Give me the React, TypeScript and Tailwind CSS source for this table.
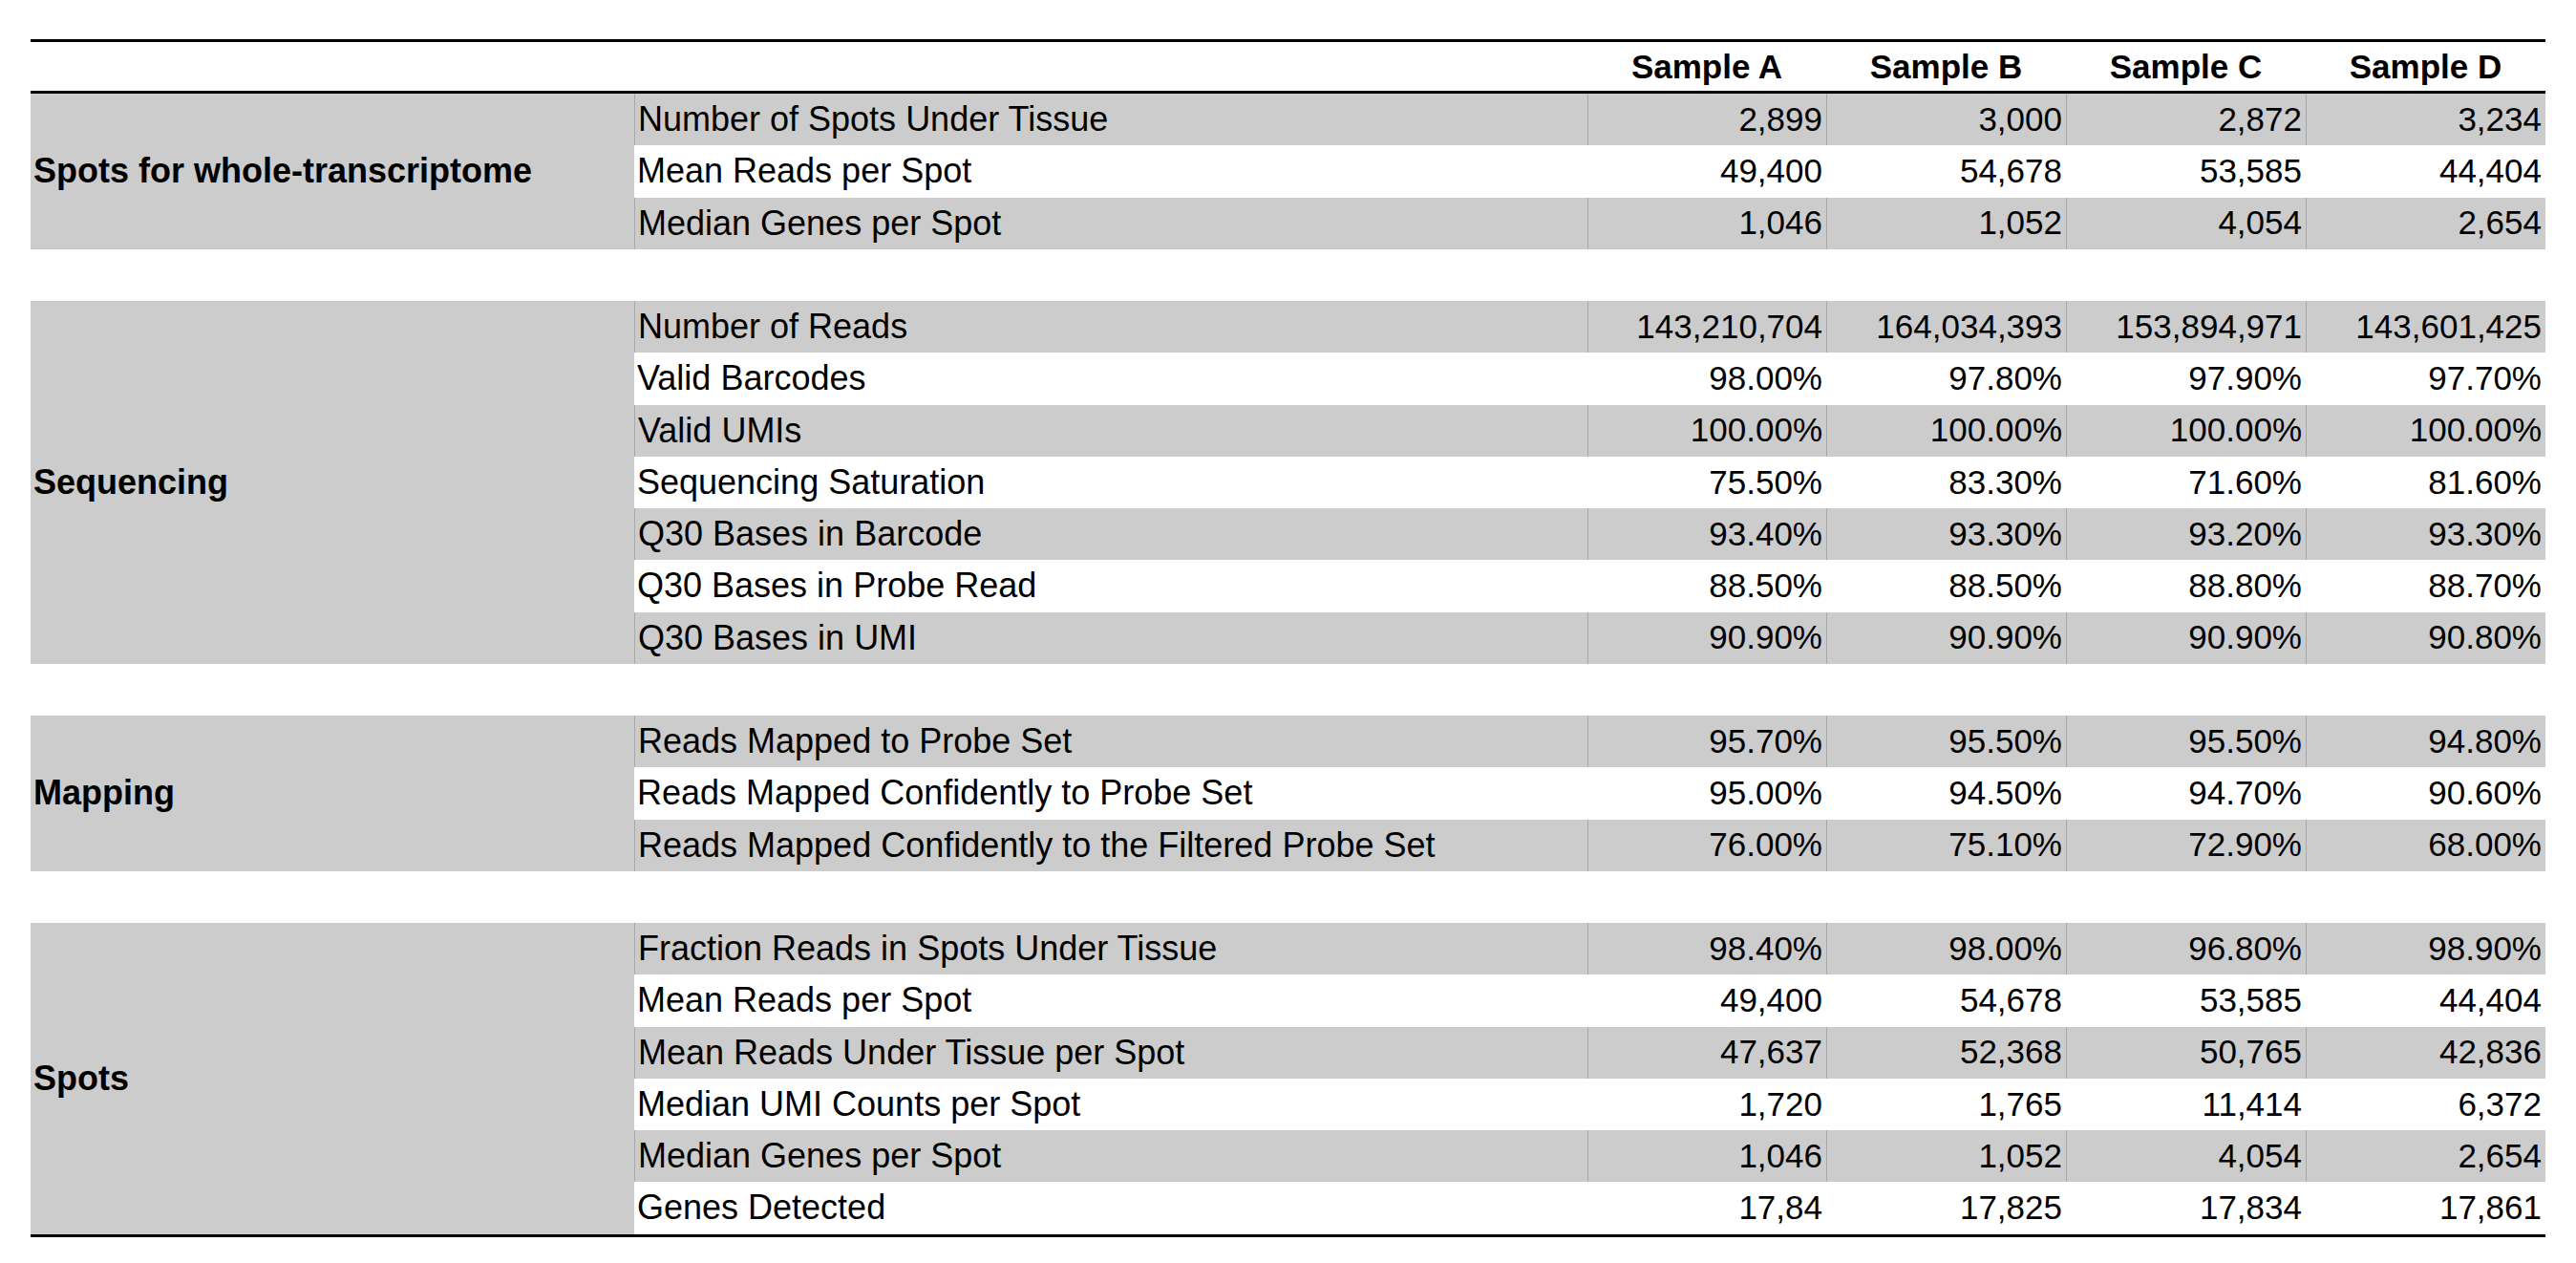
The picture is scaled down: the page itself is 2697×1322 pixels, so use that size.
type Section = {
  title: string;
  rows: [string, string, string, string, string][];
};

const sections: Section[] = [
  {
    title: "Spots for whole-transcriptome",
    rows: [
      ["Number of Spots Under Tissue", "2,899", "3,000", "2,872", "3,234"],
      ["Mean Reads per Spot", "49,400", "54,678", "53,585", "44,404"],
      ["Median Genes per Spot", "1,046", "1,052", "4,054", "2,654"],
    ],
  },
  {
    title: "Sequencing",
    rows: [
      ["Number of Reads", "143,210,704", "164,034,393", "153,894,971", "143,601,425"],
      ["Valid Barcodes", "98.00%", "97.80%", "97.90%", "97.70%"],
      ["Valid UMIs", "100.00%", "100.00%", "100.00%", "100.00%"],
      ["Sequencing Saturation", "75.50%", "83.30%", "71.60%", "81.60%"],
      ["Q30 Bases in Barcode", "93.40%", "93.30%", "93.20%", "93.30%"],
      ["Q30 Bases in Probe Read", "88.50%", "88.50%", "88.80%", "88.70%"],
      ["Q30 Bases in UMI", "90.90%", "90.90%", "90.90%", "90.80%"],
    ],
  },
  {
    title: "Mapping",
    rows: [
      ["Reads Mapped to Probe Set", "95.70%", "95.50%", "95.50%", "94.80%"],
      ["Reads Mapped Confidently to Probe Set", "95.00%", "94.50%", "94.70%", "90.60%"],
      ["Reads Mapped Confidently to the Filtered Probe Set", "76.00%", "75.10%", "72.90%", "68.00%"],
    ],
  },
  {
    title: "Spots",
    rows: [
      ["Fraction Reads in Spots Under Tissue", "98.40%", "98.00%", "96.80%", "98.90%"],
      ["Mean Reads per Spot", "49,400", "54,678", "53,585", "44,404"],
      ["Mean Reads Under Tissue per Spot", "47,637", "52,368", "50,765", "42,836"],
      ["Median UMI Counts per Spot", "1,720", "1,765", "11,414", "6,372"],
      ["Median Genes per Spot", "1,046", "1,052", "4,054", "2,654"],
      ["Genes Detected", "17,84", "17,825", "17,834", "17,861"],
    ],
  },
];

const rowSpan: Record<number, string> = {
  3: "row-span-3",
  6: "row-span-6",
  7: "row-span-7",
};

const samples = ["Sample A", "Sample B", "Sample C", "Sample D"];

const cols = "grid grid-cols-[632px_998px_250px_251px_251px_251px]";

export default function App() {
  return (
    <div className="min-h-screen bg-white pl-[32px] pt-[41px] text-[35px] text-black font-['Liberation_Sans',Arial,sans-serif]">
      <div className="w-[2633px] border-y-[3px] border-black">
        <div className={`${cols} h-[54px] border-b-[3px] border-black font-bold`}>
          <div />
          <div />
          {samples.map((s) => (
            <div key={s} className="flex items-center justify-center">
              {s}
            </div>
          ))}
        </div>

        <div className={`${cols} auto-rows-[54.25px]`}>
          {sections.map((sec, si) => (
            <Group key={sec.title} section={sec} last={si === sections.length - 1} />
          ))}
        </div>
      </div>
    </div>
  );
}

function Group({ section, last }: { section: Section; last: boolean }) {
  return (
    <>
      <div
        className={`${rowSpan[section.rows.length]} col-start-1 flex items-center bg-[#cccccc] pl-[3px] text-[36px] font-bold`}
      >
        {section.title}
      </div>
      {section.rows.map((row, i) => {
        const gray = i % 2 === 0;
        const cell = gray ? "bg-[#cccccc] border-l border-[#a8a8a8]" : "bg-white";
        return (
          <div key={row[0] + i} className="contents">
            <div className={`col-start-2 flex items-center whitespace-nowrap pl-[3px] text-[36px] ${cell}`}>
              {row[0]}
            </div>
            {row.slice(1).map((v, j) => (
              <div key={j} className={`flex items-center justify-end pr-[4px] ${cell}`}>
                {v}
              </div>
            ))}
          </div>
        );
      })}
      {!last && <div className="col-span-6 bg-white" />}
    </>
  );
}
